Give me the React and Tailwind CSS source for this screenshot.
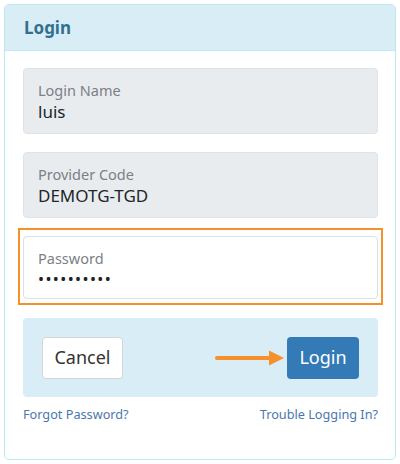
import React from 'react';

const Field = ({ label, value, filled = true, dots = false }) => (
  <div
    className={`rounded-[4px] border px-[14px] pt-[11px] ${
      filled ? 'bg-[#e9ecef] border-[#dfe3e7] pb-[9px]' : 'bg-white border-[#dcdfe3] pb-[8px]'
    }`}
  >
    <div className="text-[14.5px] leading-[20px] text-[#7b8086]">{label}</div>
    {dots ? (
      <div className="text-[16px] leading-[22px] tracking-[1.4px] text-[#1f2326]">
        {'\u2022'.repeat(10)}
      </div>
    ) : (
      <div className="text-[17px] leading-[24px] text-[#212529]">{value}</div>
    )}
  </div>
);

const App = () => {
  return (
    <div className="w-[400px] h-[464px] bg-white p-[4px] font-['Noto_Sans',sans-serif]">
      <div className="h-[456px] w-[392px] rounded-[5px] border border-[#bce8f1] bg-white overflow-hidden">
        <div className="h-[46px] bg-[#d9edf7] border-b border-[#bce8f1] pl-[19px] flex items-center">
          <span className="text-[17px] font-bold text-[#31708f]">Login</span>
        </div>
        <div className="px-[18px] pt-[17px] pr-[17px]">
          <Field label="Login Name" value="luis" />
          <div className="mt-[18px]">
            <Field label="Provider Code" value="DEMOTG-TGD" />
          </div>
          <div className="relative mt-[18px]">
            <div className="absolute left-[-5px] right-[-5px] top-[-8px] bottom-[-6px] border-2 border-[#f5902a] pointer-events-none" />
            <Field label="Password" filled={false} dots />
          </div>
          <div className="mt-[19px] h-[79px] rounded-[4px] bg-[#d9edf7] px-[19px] flex items-center justify-between">
            <button className="h-[42px] w-[81px] rounded-[4px] bg-white border border-[#d4d7da] text-[18px] text-[#333]">
              Cancel
            </button>
            <div className="flex items-center gap-[2px]">
              <svg width="70" height="16" viewBox="0 0 70 16">
                <line x1="2" y1="8" x2="56" y2="8" stroke="#f5902a" strokeWidth="4" strokeLinecap="round" />
                <polygon points="54,0.5 69,8 54,15.5" fill="#f5902a" />
              </svg>
              <button className="h-[42px] w-[72px] rounded-[4px] bg-[#337ab7] text-[18px] text-white">
                Login
              </button>
            </div>
          </div>
          <div className="mt-[6px] flex justify-between text-[12.7px] leading-[22px] text-[#4a78ad]">
            <span>Forgot Password?</span>
            <span>Trouble Logging In?</span>
          </div>
        </div>
      </div>
    </div>
  );
};

export default App;
